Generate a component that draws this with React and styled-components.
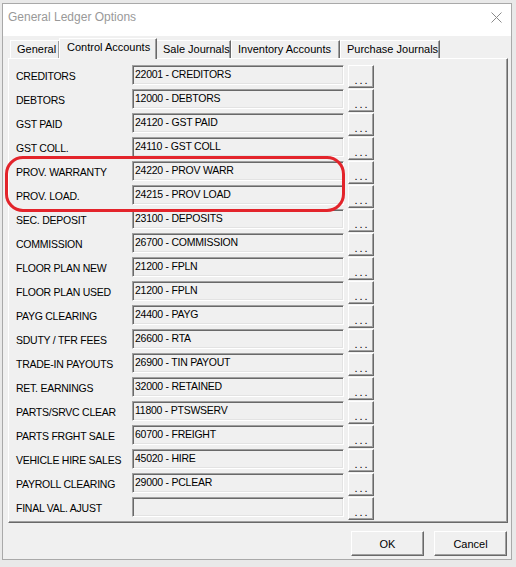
import React from 'react'
import styled, { createGlobalStyle } from 'styled-components'

const GlobalStyle = createGlobalStyle`
  body {
    margin: 0;
    background: #e9e9e9;
    font-family: "Liberation Sans", Arial, sans-serif;
  }
`

const rows = [
  ['CREDITORS', '22001 - CREDITORS'],
  ['DEBTORS', '12000 - DEBTORS'],
  ['GST PAID', '24120 - GST PAID'],
  ['GST COLL.', '24110 - GST COLL'],
  ['PROV. WARRANTY', '24220 - PROV WARR'],
  ['PROV. LOAD.', '24215 - PROV LOAD'],
  ['SEC. DEPOSIT', '23100 - DEPOSITS'],
  ['COMMISSION', '26700 - COMMISSION'],
  ['FLOOR PLAN NEW', '21200 - FPLN'],
  ['FLOOR PLAN USED', '21200 - FPLN'],
  ['PAYG CLEARING', '24400 - PAYG'],
  ['SDUTY / TFR FEES', '26600 - RTA'],
  ['TRADE-IN PAYOUTS', '26900 - TIN PAYOUT'],
  ['RET. EARNINGS', '32000 - RETAINED'],
  ['PARTS/SRVC CLEAR', '11800 - PTSWSERV'],
  ['PARTS FRGHT SALE', '60700 - FREIGHT'],
  ['VEHICLE HIRE SALES', '45020 - HIRE'],
  ['PAYROLL CLEARING', '29000 - PCLEAR'],
  ['FINAL VAL. AJUST', ''],
]

const tabs = [
  { name: 'General', width: 50 },
  { name: 'Control Accounts', width: 98, active: true },
  { name: 'Sale Journals', width: 75 },
  { name: 'Inventory Accounts', width: 109 },
  { name: 'Purchase Journals', width: 100 },
]

const Window = styled.div`
  position: relative;
  margin: 3px 4px 0 2px;
  width: 508px;
  height: 555px;
  background: #f0f0f0;
  border: 1px solid #a9a9a9;
  display: flex;
  flex-direction: column;
`

const TitleBar = styled.div`
  height: 32px;
  box-sizing: border-box;
  background: #fff;
  display: flex;
  align-items: center;
  justify-content: space-between;
  padding: 0 6px 6px 5px;
`

const Title = styled.span`
  font-size: 12px;
  color: #999;
`

const Close = styled.svg`
  width: 11px;
  height: 11px;
  margin-right: 3px;
`

const Client = styled.div`
  flex: 1;
  display: flex;
  flex-direction: column;
  padding: 0 3px 0 5px;
`

const TabRow = styled.div`
  height: 22px;
  display: flex;
  align-items: flex-end;
  padding-left: 2px;
  position: relative;
  z-index: 1;
`

const Tab = styled.div`
  box-sizing: border-box;
  width: ${p => p.$w}px;
  height: ${p => (p.$active ? 21 : 18)}px;
  margin: 0 ${p => (p.$active ? -1 : 0)}px ${p => (p.$active ? -1 : 0)}px;
  padding-left: ${p => (p.$active ? 7 : 6)}px;
  background: #f0f0f0;
  border-top: 1px solid #fff;
  border-left: 1px solid #fff;
  border-right: 1px solid #696969;
  box-shadow: inset -1px 0 0 #a0a0a0;
  font-size: 11px;
  line-height: 17px;
  color: #000;
  white-space: nowrap;
  position: relative;
  z-index: ${p => (p.$active ? 2 : 1)};
`

const Panel = styled.div`
  box-sizing: border-box;
  width: 500px;
  height: 465px;
  border-top: 1px solid #fff;
  border-left: 1px solid #fff;
  border-right: 1px solid #696969;
  border-bottom: 1px solid #696969;
  box-shadow: inset -1px -1px 0 #a0a0a0;
  padding: 6px 0 0 7px;
  display: flex;
  flex-direction: column;
`

const Row = styled.div`
  height: 24px;
  display: grid;
  grid-template-columns: 112px 212px 26px;
  column-gap: 4px;
  align-items: start;
  font-size: 10.5px;
  letter-spacing: -0.25px;
`

const Label = styled.span`
  padding-top: 5px;
  color: #000;
  white-space: nowrap;
`

const Field = styled.div`
  box-sizing: border-box;
  height: 20px;
  background: #f0f0f0;
  border-top: 1px solid #a0a0a0;
  border-left: 1px solid #a0a0a0;
  border-bottom: 1px solid #fff;
  border-right: 1px solid #fff;
  box-shadow: inset 1px 1px 0 #696969, inset -1px -1px 0 #e3e3e3;
  padding: 2px 0 0 2px;
  color: #000;
  white-space: nowrap;
`

const RaisedButton = styled.div`
  box-sizing: border-box;
  height: ${p => p.$h}px;
  width: ${p => p.$w}px;
  background: #f0f0f0;
  border-top: 1px solid #fff;
  border-left: 1px solid #fff;
  border-right: 1px solid #696969;
  border-bottom: 1px solid #696969;
  box-shadow: inset -1px -1px 0 #a0a0a0;
  display: flex;
  align-items: center;
  justify-content: center;
  font-size: 11px;
  letter-spacing: 0;
  color: #000;
`

const Dots = styled.span`
  letter-spacing: 2px;
  margin: 6px 0 0 2px;
`

const Footer = styled.div`
  display: flex;
  justify-content: flex-end;
  gap: 10px;
  padding: 8px 1px 0 0;
`

const Highlight = styled.div`
  position: absolute;
  left: 2px;
  top: 152px;
  width: 334px;
  height: 50px;
  border: 3px solid #e3242b;
  border-radius: 18px;
  pointer-events: none;
`

export default function App() {
  return (
    <>
      <GlobalStyle />
      <Window>
        <TitleBar>
          <Title>General Ledger Options</Title>
          <Close viewBox="0 0 11 11">
            <path d="M0.5 0.5 L10.5 10.5 M10.5 0.5 L0.5 10.5" stroke="#8a8a8a" strokeWidth="1" />
          </Close>
        </TitleBar>
        <Client>
          <TabRow>
            {tabs.map(t => (
              <Tab key={t.name} $w={t.width} $active={t.active}>{t.name}</Tab>
            ))}
          </TabRow>
          <Panel>
            {rows.map(([label, value]) => (
              <Row key={label}>
                <Label>{label}</Label>
                <Field>{value}</Field>
                <RaisedButton $w={26} $h={23}><Dots>...</Dots></RaisedButton>
              </Row>
            ))}
          </Panel>
          <Footer>
            <RaisedButton $w={73} $h={25}>OK</RaisedButton>
            <RaisedButton $w={73} $h={25}>Cancel</RaisedButton>
          </Footer>
        </Client>
        <Highlight />
      </Window>
    </>
  )
}
